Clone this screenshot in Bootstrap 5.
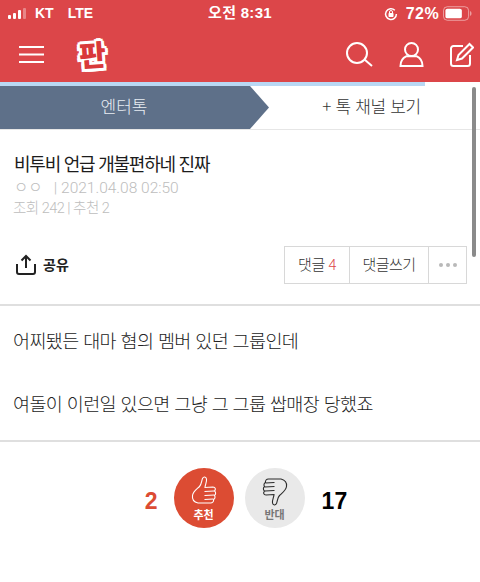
<!DOCTYPE html>
<html lang="ko">
<head>
  <meta charset="UTF-8" />
  <meta name="viewport" content="width=device-width, initial-scale=1" />
  <title>판</title>
  <link href="https://cdn.jsdelivr.net/npm/bootstrap@5.3.3/dist/css/bootstrap.min.css" rel="stylesheet" />
  <style>
    html, body { height: 582px; overflow: hidden; }
    body { background: #fff; font-family: "Noto Sans CJK KR", "Liberation Sans", sans-serif; color: #222; width: 480px; position: relative; }
    .red-top { background: #dc4649; color: #fff; }
    .status-bar { height: 27px; padding: 0 8px; font-family: "Liberation Sans", "Noto Sans CJK KR", sans-serif; font-size: 15px; font-weight: 700; letter-spacing: .3px; }
    .status-bar > * { flex: 1 1 0; }
    .signal { gap: 2px; align-items: flex-end; height: 11px; margin-right: 9px; }
    .signal i { display: block; width: 3px; background: #fff; border-radius: 1px; }
    .net-kind { font-size: 14px; letter-spacing: 0; margin-left: 14px; }
    .batt-pct { font-size: 16px; letter-spacing: .4px; }
    .app-head { height: 55px; padding: 0 6px 0 19px; }
    .app-logo { font-size: 29px; font-weight: 900; color: #d9393a; margin: 0 0 3px 35px; line-height: 1; text-shadow: 3px 0 #fff, -3px 0 #fff, 0 3px #fff, 0 -3px #fff, 2px 2px #fff, -2px -2px #fff, 2px -2px #fff, -2px 2px #fff, 3px 3px #fff, -3px 3px #fff; transform: rotate(-4deg); }
    .head-icons { gap: 26px; }
    .progress-line { height: 4px; background: #fff; }
    .progress-line div { width: 425px; height: 100%; background: #b9d8f4; }
    .tab-row { height: 44px; border-bottom: 1px solid #e6e6e6; }
    .tab-on { width: 269px; background: #5e7089; color: #e8edf3; font-size: 17px; font-weight: 300; clip-path: polygon(0 0, 250px 0, 269px 50%, 250px 100%, 0 100%); padding: 0 21px 3px 0; }
    .tab-off { font-size: 17px; font-weight: 300; color: #333; letter-spacing: -.35px; padding: 0 6px 3px 0; }
    .post-head { height: 176px; padding: 21px 14px 0; border-bottom: 2px solid #dfdfdf; }
    .post-title { font-size: 18px; font-weight: 400; line-height: 24px; letter-spacing: -1.24px; color: #1c1c1c; margin: 0; }
    .post-meta { font-family: Roboto, "Noto Sans CJK KR", sans-serif; font-size: 15.5px; font-weight: 300; line-height: 20px; color: #bdbdbd; margin-top: 3px; }
    .meta-stat { font-size: 14.5px; letter-spacing: -.5px; margin: 1px 0 0 -1px; }
    .share-row { margin-top: 27px; }
    .share-btn { margin: 0 0 2px 2px; }
    .share-txt { font-size: 14px; font-weight: 700; color: #222; margin-left: 3px; }
    .cmt-group { border: 1px solid #d8d8d8; height: 38px; margin-right: -1px; }
    .cmt-group > div { font-size: 15px; font-weight: 300; color: #333; letter-spacing: -.5px; border-right: 1px solid #d8d8d8; padding-bottom: 1px; }
    .cmt-group > div:last-child { border-right: 0; }
    .cmt-count { color: #dc4649; }
    .dots { gap: 3px; }
    .dots i { display: block; width: 4px; height: 4px; border-radius: 50%; background: #b9b9b9; }
    .post-body { height: 136px; padding: 18px 13px 0; border-bottom: 2px solid #dfdfdf; font-size: 18.5px; font-weight: 300; color: #222; letter-spacing: -.62px; }
    .post-body p { margin: 0 0 31px; line-height: 32px; }
    .vote-row { padding: 26px 0 0 12px; }
    .vote-num { font-size: 23px; font-weight: 700; font-family: "Liberation Sans", sans-serif; line-height: 1; margin-top: 7px; }
    .vote-btn { width: 60px; height: 60px; border-radius: 50%; font-size: 11px; font-weight: 700; line-height: 1; gap: 3px; padding-bottom: 1px; }
    .vote-up { background: #dc4c33; color: #fff; margin-left: 16px; }
    .vote-down { background: #e9e9e9; color: #777; margin-left: 11px; margin-right: 17px; }
    .scroll-thumb { position: absolute; right: 4px; top: 87px; width: 4px; height: 170px; background: #8a8a8a; border-radius: 2px; }
  </style>
</head>
<body>
  <div class="red-top">
    <div class="status-bar d-flex align-items-center">
      <div class="d-flex align-items-center">
        <span class="signal d-flex">
          <i style="height:4px"></i><i style="height:6px"></i><i style="height:9px"></i><i style="height:11px;opacity:.35"></i>
        </span>
        <span class="net-kind ms-0">KT</span><span class="net-kind">LTE</span>
      </div>
      <div class="text-center text-nowrap">오전 8:31</div>
      <div class="d-flex align-items-center justify-content-end">
        <svg width="14" height="14" viewBox="0 0 14 14" fill="none" stroke="#fff" stroke-width="1.5" class="me-2"><path d="M12.4 7a5.4 5.4 0 1 1-1.6-3.8"/><rect x="4.5" y="6" width="5" height="4" rx=".7" fill="#fff" stroke="none"/><path d="M5.5 6V5a1.5 1.5 0 0 1 3 0v1" stroke-width="1"/></svg>
        <span class="batt-pct">72%</span>
        <svg width="29" height="15" viewBox="0 0 30 15" class="ms-1"><rect x=".5" y=".5" width="26" height="14" rx="4" fill="none" stroke="#fff" stroke-opacity=".5"/><rect x="2.5" y="2.5" width="17" height="10" rx="2" fill="#fff"/><path d="M28 5v5a2.5 2.5 0 0 0 1.5-2.5A2.5 2.5 0 0 0 28 5z" fill="#fff" fill-opacity=".5"/></svg>
      </div>
    </div>
    <div class="app-head d-flex align-items-center">
      <svg width="25" height="17" viewBox="0 0 25 17" stroke="#fff" stroke-width="2"><path d="M0 1h25M0 8.500h25M0 16h25"/></svg>
      <span class="app-logo">판</span>
      <div class="head-icons ms-auto d-flex align-items-center">
        <svg width="27" height="25" viewBox="0 0 27 25" fill="none" stroke="#fff" stroke-width="2"><circle cx="11" cy="11" r="10"/><path d="M18.500 17.500l7.500 6.500"/></svg>
        <svg width="25" height="25" viewBox="0 0 25 25" fill="none" stroke="#fff" stroke-width="2"><circle cx="12.500" cy="7.500" r="6.500"/><path d="M1.500 24c0-4.500 2-8 6-9.800h10c4 1.800 6 5.300 6 9.800z"/></svg>
        <svg width="24" height="25" viewBox="0 0 24 25" fill="none" stroke="#fff" stroke-width="2"><path d="M20 13v8.500a2.500 2.500 0 0 1-2.500 2.500h-14A2.500 2.500 0 0 1 1 21.500v-15A2.500 2.500 0 0 1 3.500 4H13"/><path d="M7 18l1.500-5L19.500 2l3.500 3.500L12 16.500z"/></svg>
      </div>
    </div>
  </div>
  <div class="progress-line"><div></div></div>
  <div class="tab-row d-flex">
    <div class="tab-on d-flex align-items-center justify-content-center">엔터톡</div>
    <div class="tab-off flex-grow-1 d-flex align-items-center justify-content-center">+ 톡 채널 보기</div>
  </div>
  <div class="post-head">
    <h1 class="post-title">비투비 언급 개불편하네 진짜</h1>
    <div class="post-meta">ㅇㅇ &nbsp;&nbsp;| 2021.04.08 02:50</div>
    <div class="post-meta meta-stat">조회 242 | 추천 2</div>
    <div class="share-row d-flex align-items-center justify-content-between">
      <div class="share-btn d-flex align-items-center gap-1">
        <svg width="20" height="21" viewBox="0 0 20 21" fill="none" stroke="#222" stroke-width="2"><path d="M10 14V2M5.500 6.500L10 2l4.500 4.500M1 10v8a2 2 0 0 0 2 2h14a2 2 0 0 0 2-2v-8"/></svg>
        <span class="share-txt">공유</span>
      </div>
      <div class="cmt-group d-flex">
        <div class="d-flex align-items-center justify-content-center" style="width:65px">댓글&nbsp;<span class="cmt-count">4</span></div>
        <div class="d-flex align-items-center justify-content-center" style="width:79px">댓글쓰기</div>
        <div class="dots d-flex align-items-center justify-content-center" style="width:37px"><i></i><i></i><i></i></div>
      </div>
    </div>
  </div>
  <div class="post-body">
    <p>어찌됐든 대마 혐의 멤버 있던 그룹인데</p>
    <p>여돌이 이런일 있으면 그냥 그 그룹 쌉매장 당했죠</p>
  </div>
  <div class="vote-row d-flex align-items-center justify-content-center">
    <span class="vote-num" style="color:#dc4c33">2</span>
    <div class="vote-btn vote-up d-flex flex-column align-items-center justify-content-center">
      <svg width="26" height="30" viewBox="0 0 26 30" fill="none" stroke="#fff" stroke-width="1.100"><path d="M7 27C3 26 1 23 1.500 19.500 2 15.500 6 13 8.500 10.500 10.500 8.500 10.500 5 11.500 2.500 12.500.5 15 .5 15.500 3c.5 3-1.500 6-1.500 8.500l8-.5c2.500 0 3 2.500 1.500 4 1.500 1 1.500 3.500 0 4.500 1 1.500.5 3.500-1 4 .5 2-1 3.500-3 3.500z"/><path d="M13.500 15.500l9.500-.5M13.500 19.500l10-.5M13.500 23.500l9-.5"/></svg>
      <span>추천</span>
    </div>
    <div class="vote-btn vote-down d-flex flex-column align-items-center justify-content-center">
      <svg width="26" height="30" viewBox="0 0 26 30" fill="none" stroke="#2a2a2a" stroke-width="1.100"><path d="M19 3C23 4 25 7 24.500 10.500 24 14.500 20 17 17.500 19.500 15.500 21.500 15.500 25 14.500 27.500 13.500 29.500 11 29.500 10.500 27c-.5-3 1.500-6 1.500-8.500l-8 .5c-2.500 0-3-2.500-1.500-4-1.500-1-1.500-3.500 0-4.500-1-1.500-.5-3.500 1-4-.5-2 1-3.500 3-3.500z"/><path d="M12.500 14.500L3 15M12.500 10.500L2.500 11M12.500 6.500l-9 .5"/></svg>
      <span>반대</span>
    </div>
    <span class="vote-num text-black">17</span>
  </div>
  <div class="scroll-thumb"></div>
</body>
</html>
